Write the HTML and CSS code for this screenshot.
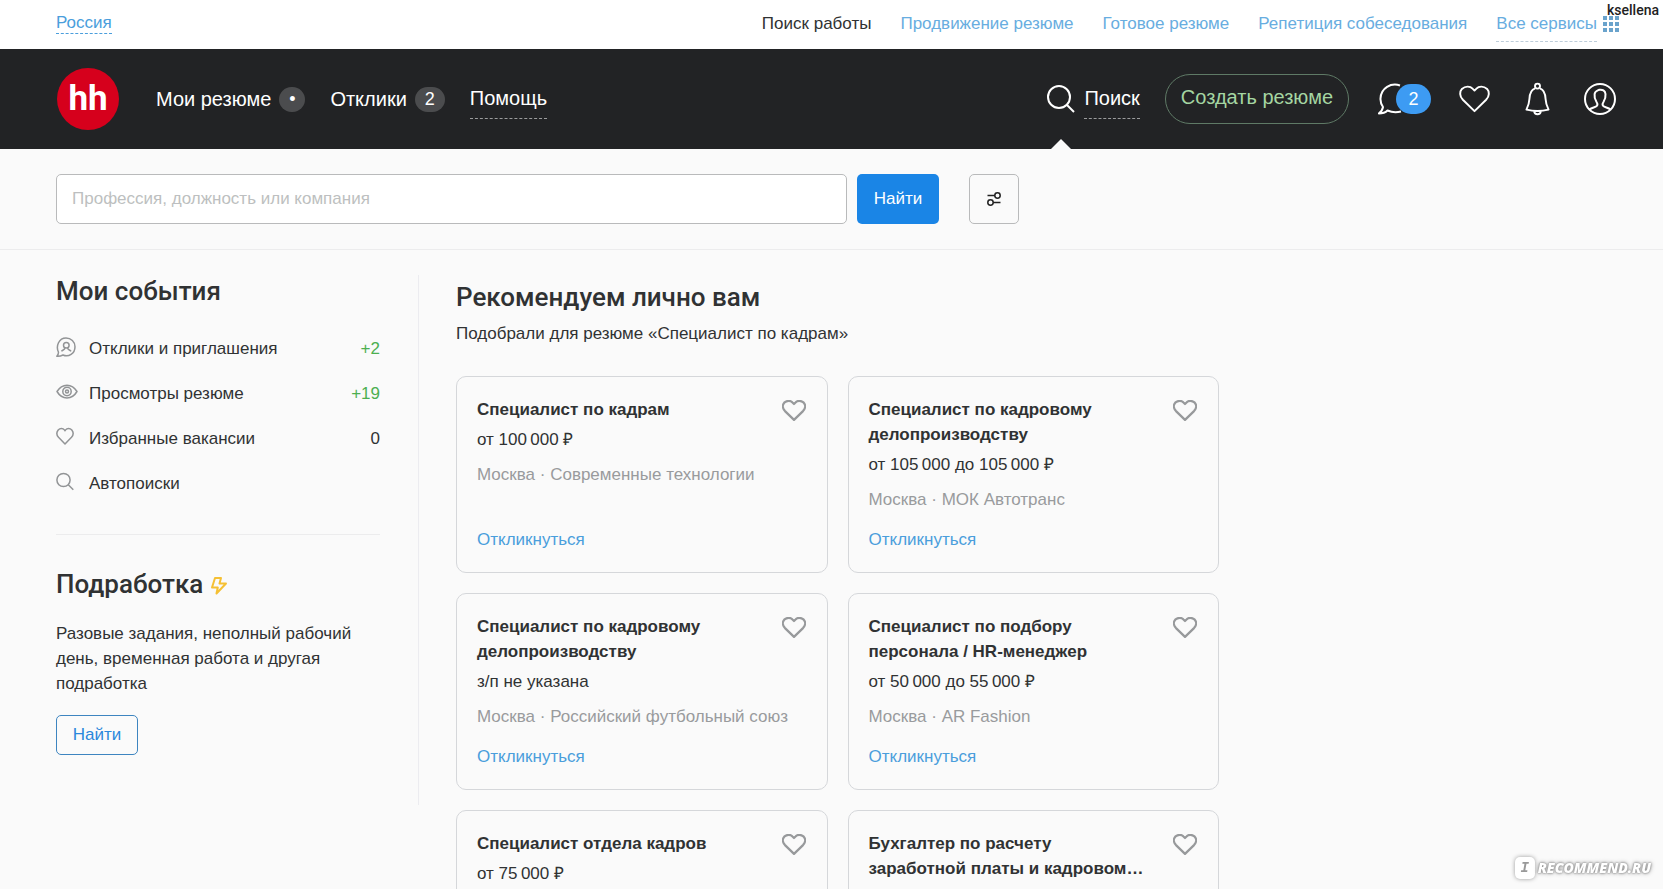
FILE: index.html
```html
<!DOCTYPE html>
<html lang="ru">
<head>
<meta charset="utf-8">
<meta name="viewport" content="width=device-width, initial-scale=1">
<title>Поиск работы</title>
<link rel="stylesheet" href="styles.css">
</head>
<body>
<svg class="sprite" aria-hidden="true">
  <symbol id="heart" viewBox="0 0 32 28"><path d="M16 26.500 4 14.800C.400 11 .500 6.300 3 3.600 6.500.400 11.500.500 14 3.300L16 5.300 18 3.300C20.500.500 25.500.400 29 3.600 31.500 6.300 31.600 11 28 14.800Z"/></symbol>
  <symbol id="loupe" viewBox="0 0 28 28"><circle cx="12" cy="12" r="11"/><path d="m19.500 19.500 7.500 7.500"/></symbol>
</svg>
<div class="page">
  <div class="topbar">
    <a class="region" href="#">Россия</a>
    <nav class="services" aria-label="Сервисы">
      <a class="current" href="#">Поиск работы</a>
      <a href="#">Продвижение резюме</a>
      <a href="#">Готовое резюме</a>
      <a href="#">Репетиция собеседования</a>
      <a class="all" href="#"><span>Все сервисы</span>
        <svg class="dots" viewBox="0 0 17 17" aria-hidden="true"><path d="M0 0h4v4H0zM6 0h4v4H6zM12 0h4v4h-4zM0 6h4v4H0zM6 6h4v4H6zM12 6h4v4h-4zM0 12h4v4H0zM6 12h4v4H6zM12 12h4v4h-4z"/></svg>
      </a>
    </nav>
    <span class="author">ksellena</span>
  </div>

  <header class="header">
    <a class="logo" href="#">hh</a>
    <nav class="nav" aria-label="Основное меню">
      <a href="#">Мои резюме <span class="count dot">•</span></a>
      <a href="#">Отклики <span class="count">2</span></a>
      <a href="#"><span class="dashed">Помощь</span></a>
    </nav>
    <div class="tools">
      <a class="find" href="#"><svg class="line find-icon" aria-hidden="true"><use href="#loupe"/></svg><span class="dashed">Поиск</span></a>
      <button class="create" type="button">Создать резюме</button>
      <div class="icons">
        <a class="chat" href="#" aria-label="Сообщения">
          <svg class="line" width="32" height="32" viewBox="0 0 32 32" aria-hidden="true"><path d="M22 2.500C13 -.500 3 5 2.500 15.500 2.300 19 3.500 22 5 24 4.500 27 3 29 .800 30.500 4.500 30.500 7.500 29.500 9.500 27.500 14 29.500 19 29.500 23 28.500"/></svg>
          <span class="unread">2</span>
        </a>
        <a href="#" aria-label="Избранное"><svg class="line" width="31" height="28" aria-hidden="true"><use href="#heart"/></svg></a>
        <a href="#" aria-label="Уведомления"><svg class="line" width="25" height="34" viewBox="0 0 26 34" aria-hidden="true"><circle cx="13" cy="3.600" r="2.600"/><path d="M10.500 6C6 7.500 4.800 12 4.600 17 4.400 22 3 25 1.500 28 8 29.600 18 29.600 24.500 28 23 25 21.600 22 21.400 17 21.200 12 20 7.500 15.500 6M9.500 29.500C10 34 16 34 16.500 29.500"/></svg></a>
        <a href="#" aria-label="Профиль"><svg class="line" width="32" height="32" viewBox="0 0 32 32" aria-hidden="true"><circle cx="16" cy="16" r="15"/><path d="M5.500 26.500C8 24.300 12 24.500 13.200 22.500 13.800 21 13.200 19.800 12.300 18.500 11 16.500 10.300 13.500 10.600 11 11 8 13.500 7.500 15 6.800 18.500 6.200 21.200 7.500 21.500 11 21.700 13.500 21 16.500 19.700 18.500 18.800 19.800 18.200 21 18.800 22.500 20 24.500 24 24.300 26.500 26.500"/></svg></a>
      </div>
    </div>
  </header>

  <form class="search">
    <input class="query" type="text" aria-label="Поиск вакансий" placeholder="Профессия, должность или компания">
    <button class="submit" type="button">Найти</button>
    <button class="filter" type="button" aria-label="Фильтры"><svg width="14" height="14" viewBox="0 0 14 14" aria-hidden="true"><circle cx="10.500" cy="3.500" r="2.700"/><circle cx="3.500" cy="10.500" r="2.700"/><path d="M.500 3.500H8M6 10.500h7.500"/></svg></button>
  </form>

  <main class="content">
    <aside class="side">
      <h2>Мои события</h2>
      <ul class="events">
        <li><a href="#"><svg class="mini" viewBox="0 0 22 20" aria-hidden="true"><path d="M.800 19.200C2 18 2.500 17 2.500 15.300-.500 9 3 1 10 1c5 0 9 3.800 9 8.700 0 7-6.500 10.800-12 8.300-2 1-4 1.400-6.200 1.200Z"/><circle cx="10.300" cy="8.300" r="2.800"/><path d="M5.500 14.300c1-1.800 3.300-1 3.500-3.500M15 14.300c-1-1.800-3.200-1-3.400-3.500"/></svg>Отклики и приглашения</a><span class="plus">+2</span></li>
        <li><a href="#"><svg class="mini" viewBox="0 0 22 20" aria-hidden="true"><path d="M1 9.500C6 1 16 1 21 9.500 16 18 6 18 1 9.500Z"/><circle cx="11" cy="9.500" r="4.200"/><circle cx="11" cy="9.500" r="1.500"/></svg>Просмотры резюме</a><span class="plus">+19</span></li>
        <li><a href="#"><svg class="mini" viewBox="0 0 22 20" aria-hidden="true"><path d="M9 17 2.500 10.300C.500 8 .600 5 2.200 3 4 .900 7 1 8.400 2.900L9 3.700 9.600 2.900C11 1 14 .900 15.800 3 17.400 5 17.500 8 15.500 10.300Z"/></svg>Избранные вакансии</a><span>0</span></li>
        <li><a href="#"><svg class="mini" viewBox="0 0 22 20" aria-hidden="true"><circle cx="7.500" cy="8" r="6.600"/><path d="m12.300 12.800 5 5"/></svg>Автопоиски</a></li>
      </ul>
      <section class="parttime">
        <h2>Подработка <svg class="bolt" width="16" height="18" viewBox="0 0 16 18" aria-hidden="true"><path d="M4 1h6L8.500 6.500H15L5.500 16.500 6.800 10.500H1Z"/></svg></h2>
        <p>Разовые задания, неполный рабочий день, временная работа и другая подработка</p>
        <button class="outline" type="button">Найти</button>
      </section>
    </aside>

    <section class="feed">
      <h2>Рекомендуем лично вам</h2>
      <p class="lead">Подобрали для резюме «Специалист по кадрам»</p>
      <div class="cards">
        <article class="card">
          <div class="card-top"><h3>Специалист по кадрам</h3><button class="fav" type="button" aria-label="В избранное"><svg aria-hidden="true"><use href="#heart"/></svg></button></div>
          <p class="pay">от 100&#8239;000 ₽</p>
          <p class="firm">Москва · Современные технологии</p>
          <a class="reply" href="#">Откликнуться</a>
        </article>
        <article class="card">
          <div class="card-top"><h3>Специалист по кадровому делопроизводству</h3><button class="fav" type="button" aria-label="В избранное"><svg aria-hidden="true"><use href="#heart"/></svg></button></div>
          <p class="pay">от 105&#8239;000 до 105&#8239;000 ₽</p>
          <p class="firm">Москва · МОК Автотранс</p>
          <a class="reply" href="#">Откликнуться</a>
        </article>
        <article class="card">
          <div class="card-top"><h3>Специалист по кадровому делопроизводству</h3><button class="fav" type="button" aria-label="В избранное"><svg aria-hidden="true"><use href="#heart"/></svg></button></div>
          <p class="pay">з/п не указана</p>
          <p class="firm">Москва · Российский футбольный союз</p>
          <a class="reply" href="#">Откликнуться</a>
        </article>
        <article class="card">
          <div class="card-top"><h3>Специалист по подбору персонала / HR-менеджер</h3><button class="fav" type="button" aria-label="В избранное"><svg aria-hidden="true"><use href="#heart"/></svg></button></div>
          <p class="pay">от 50&#8239;000 до 55&#8239;000 ₽</p>
          <p class="firm">Москва · AR Fashion</p>
          <a class="reply" href="#">Откликнуться</a>
        </article>
        <article class="card">
          <div class="card-top"><h3>Специалист отдела кадров</h3><button class="fav" type="button" aria-label="В избранное"><svg aria-hidden="true"><use href="#heart"/></svg></button></div>
          <p class="pay">от 75&#8239;000 ₽</p>
        </article>
        <article class="card">
          <div class="card-top"><h3>Бухгалтер по расчету заработной платы и кадровом…</h3><button class="fav" type="button" aria-label="В избранное"><svg aria-hidden="true"><use href="#heart"/></svg></button></div>
        </article>
      </div>
    </section>
  </main>
</div>
<div class="watermark"><span class="mark">I</span><span>RECOMMEND.RU</span></div>
</body>
</html>
```
FILE: styles.css
```css
* { box-sizing: border-box; }
body {
  margin: 0;
  background: #fafafa;
  color: #303233;
  font: 17px/25px "Liberation Sans", Arial, sans-serif;
}
a { color: inherit; text-decoration: none; }
h2, h3, p, ul { margin: 0; padding: 0; }
ul { list-style: none; }
button, input { font: inherit; color: inherit; margin: 0; }
button { cursor: pointer; }
svg { display: block; flex: none; fill: none; stroke: currentColor; stroke-linejoin: round; }
.sprite { position: absolute; width: 0; height: 0; }
.page { height: 100vh; overflow: hidden; }

.topbar {
  position: relative;
  display: flex;
  justify-content: space-between;
  align-items: flex-start;
  height: 49px;
  padding: 12px 43px 0 56px;
  background: #fff;
}
.region { line-height: 21px; color: #4a9edc; border-bottom: 1px dashed #4a9edc; }
.services { display: flex; gap: 29px; line-height: 23px; color: #68ade0; }
.current { color: #303233; }
.all { display: flex; gap: 6px; }
.all span { height: 30px; border-bottom: 1px dashed #bdcdda; }
.dots { width: 17px; height: 17px; margin-top: 4px; fill: #6aa3cc; stroke: none; }
.author {
  position: absolute;
  top: 0;
  right: 4px;
  font: 500 14px/20px Roboto, sans-serif;
  color: #222;
}

.header {
  display: flex;
  align-items: center;
  height: 100px;
  padding: 0 47px 0 57px;
  background: #222325;
  color: #fff;
  font-size: 20px;
}
.logo {
  width: 62px;
  height: 62px;
  margin-right: 37px;
  border-radius: 50%;
  background: #d6001c;
  font: 700 35px/62px Roboto, sans-serif;
  text-align: center;
}
.nav { display: flex; gap: 25px; }
.nav a { display: flex; align-items: center; gap: 8px; }
.count {
  min-width: 30px;
  border-radius: 13px;
  background: #4b4c4e;
  font-size: 18px;
  line-height: 25px;
  text-align: center;
}
.dot { min-width: 26px; }
.dashed { height: 40px; line-height: 38px; border-bottom: 1px dashed #9b9c9d; }
.tools { display: flex; align-items: center; margin-left: auto; }
.line { stroke-width: 2; }
.find { position: relative; display: flex; align-items: center; gap: 9px; }
.find-icon { width: 28px; height: 28px; }
.find::after {
  content: "";
  position: absolute;
  left: 4px;
  bottom: -30px;
  border: 10px solid transparent;
  border-top: 0;
  border-bottom-color: #fafafa;
}
.create {
  height: 50px;
  margin: 0 29px 0 25px;
  padding: 0 15px 4px;
  border: 1px solid #5f7a66;
  border-radius: 25px;
  background: none;
  color: #a5d6a2;
}
.icons { display: flex; align-items: center; gap: 28px; }
.icons a:nth-child(3) { padding: 0 6px; }
.icons a:nth-child(2) { padding-right: 1px; }
.chat { display: flex; align-items: center; }
.unread {
  z-index: 1;
  width: 35px;
  margin-left: -14px;
  border-radius: 15px;
  background: #3d9bf3;
  font-size: 18px;
  line-height: 30px;
  text-align: center;
}

.search {
  display: flex;
  padding: 25px 44px 25px 56px;
  border-bottom: 1px solid #ececed;
}
.query {
  width: 791px;
  height: 50px;
  padding: 0 15px;
  border: 1px solid #b9babb;
  border-radius: 5px;
  background: #fff;
}
.query::placeholder { color: #bdbfc0; opacity: 1; }
.submit {
  min-width: 82px;
  margin-left: 10px;
  padding: 0 15px 2px;
  border: 0;
  border-radius: 5px;
  background: #1a85e6;
  color: #fff;
}
.filter {
  display: grid;
  place-items: center;
  width: 50px;
  margin-left: 30px;
  padding: 0;
  border: 1px solid #b9babb;
  border-radius: 5px;
  background: none;
}
.filter svg { stroke-width: 1.5; stroke: #222; overflow: visible; }

.content {
  display: grid;
  grid-template-columns: repeat(12, 1fr);
  gap: 37px;
  align-items: start;
  padding: 25px 44px 0 56px;
}
h2 { font: 500 26px/32px Roboto, sans-serif; }
.side {
  grid-column: span 3;
  min-height: 530px;
  padding-right: 38px;
  border-right: 1px solid #ececf0;
}
.events { padding: 29px 0 38px; display: grid; gap: 20px; }
.events li, .events a { display: flex; }
.events li { justify-content: space-between; }
.events a { gap: 11px; }
.mini { width: 22px; height: 20px; margin-top: 1px; stroke: #929496; stroke-width: 1.5; }
.plus { color: #4caf50; }
.parttime { border-top: 1px solid #ececed; padding-top: 33px; }
.parttime h2 { display: flex; align-items: center; gap: 8px; }
.parttime p { margin: 21px 0 19px; }
.bolt { margin-top: 4px; stroke: #f5c034; stroke-width: 2; }
.outline {
  min-width: 82px;
  height: 40px;
  padding: 0 15px 2px;
  border: 1px solid #3d85c0;
  border-radius: 5px;
  background: none;
  color: #2b88dc;
}

.feed { grid-column: span 6; padding-top: 6px; }
.lead { margin: 8px 0 30px; }
.cards {
  display: grid;
  grid-template-columns: 1fr 1fr;
  grid-auto-rows: minmax(197px, auto);
  gap: 20px;
}
.card {
  display: flex;
  flex-direction: column;
  align-items: flex-start;
  padding: 20px;
  border: 1px solid #d5d7da;
  border-radius: 10px;
}
.card-top {
  display: flex;
  align-self: stretch;
  justify-content: space-between;
  align-items: flex-start;
  gap: 20px;
}
h3 { font-size: 17px; line-height: 25px; }
.fav { padding: 3px 1px 1px; border: 0; background: none; color: #97999b; }
.fav svg { width: 24px; height: 21px; stroke-width: 3; }
.pay { margin-top: 5px; }
.firm { margin: 10px 0 15px; color: #999b9d; }
.reply { margin-top: auto; color: #4a9edc; }

.watermark {
  position: fixed;
  right: 12px;
  bottom: 10px;
  display: flex;
  align-items: center;
  gap: 3px;
  color: #fff;
  font: italic 800 14px/22px "Open Sans", sans-serif;
  text-shadow: 0 0 2px #888, 0 0 3px #999, 0 0 5px #aaa;
}
.mark {
  width: 20px;
  border-radius: 5px;
  background: #fff;
  box-shadow: 0 0 4px #999;
  color: #999;
  font-family: "Liberation Mono", monospace;
  text-align: center;
  text-shadow: none;
}
```
